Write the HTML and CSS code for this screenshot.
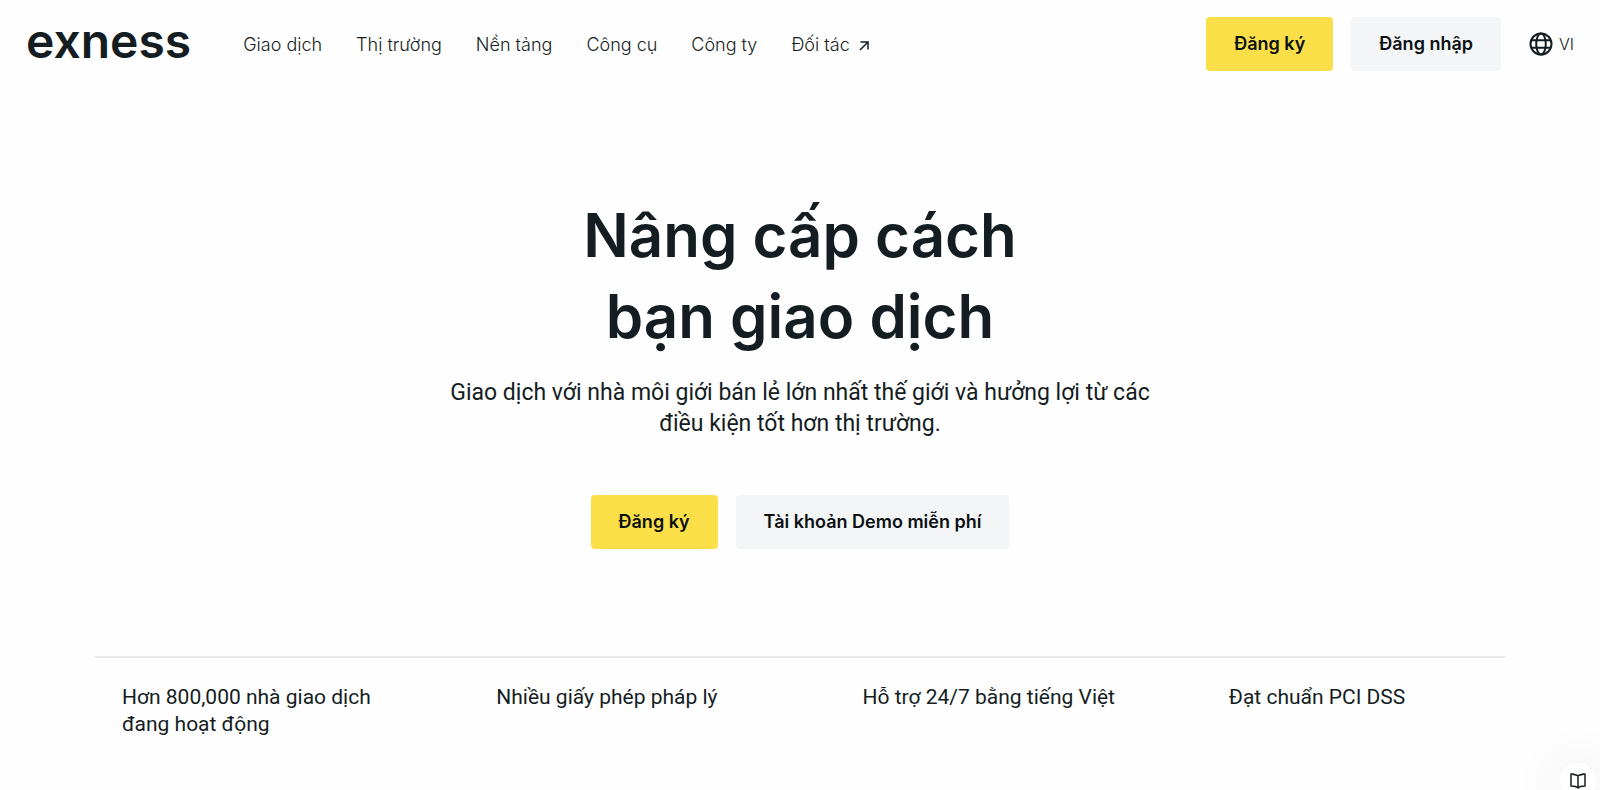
FILE: index.html
```html
<!DOCTYPE html>
<html lang="vi">
<head>
<meta charset="utf-8">
<meta name="viewport" content="width=device-width, initial-scale=1">
<title>Exness</title>
<link rel="stylesheet" href="styles.css">
</head>
<body>
<header class="header">
  <a class="logo" href="#">exness</a>
  <nav class="nav">
    <a href="#">Giao dịch</a>
    <a href="#">Thị trường</a>
    <a href="#">Nền tảng</a>
    <a href="#">Công cụ</a>
    <a href="#">Công ty</a>
    <a href="#">Đối tác
      <svg class="arrow" viewBox="0 0 10 10" aria-hidden="true"><path d="M1 9 8.800 1.200M1.500 1h7.500v7.500"/></svg>
    </a>
  </nav>
  <div class="actions">
    <button class="btn btn-primary" type="button">Đăng ký</button>
    <button class="btn btn-secondary" type="button">Đăng nhập</button>
    <button class="language" type="button">
      <svg class="globe" viewBox="0 0 24 24" aria-hidden="true"><circle cx="12" cy="12" r="10.500"/><ellipse cx="12" cy="12" rx="4.800" ry="10.500"/><path d="M2.500 8.300h19M2.500 15.700h19"/></svg>
      VI
    </button>
  </div>
</header>
<main>
  <section class="hero">
    <h1>Nâng cấp cách<br>bạn giao dịch</h1>
    <p>Giao dịch với nhà môi giới bán lẻ lớn nhất thế giới và hưởng lợi từ các điều kiện tốt hơn thị trường.</p>
    <div class="hero-actions">
      <button class="btn btn-primary" type="button">Đăng ký</button>
      <button class="btn btn-secondary" type="button">Tài khoản Demo miễn phí</button>
    </div>
  </section>
  <ul class="features">
    <li>Hơn 800,000 nhà giao dịch<br>đang hoạt động</li>
    <li>Nhiều giấy phép pháp lý</li>
    <li>Hỗ trợ 24/7 bằng tiếng Việt</li>
    <li>Đạt chuẩn PCI DSS</li>
  </ul>
</main>
<button class="guide" type="button" aria-label="Hướng dẫn">
  <svg viewBox="0 0 16 16" aria-hidden="true"><path d="M8 2.800C6.500 1.800 3.800 1.800 2.500 1H1v12c3 0 5.500.3 7 2 1.500-1.700 4-2 7-2V1h-1.500C12.200 1.800 9.500 1.800 8 2.800zM8 2.800v12"/></svg>
</button>
</body>
</html>
```
FILE: styles.css
```css
* { box-sizing: border-box; }

body {
  margin: 0;
  min-height: 100vh;
  overflow: hidden;
  background: #fefefe;
  color: #141d22;
  font-family: Inter, "Noto Sans", sans-serif;
  font-size: 18px;
}

a { color: inherit; text-decoration: none; }

.header {
  display: flex;
  align-items: center;
  height: 88px;
  padding: 0 26px;
}

.logo {
  font-size: 48px;
  font-weight: 600;
  line-height: 60px;
  margin-bottom: 6px;
}

.nav {
  display: flex;
  gap: 34px;
  margin-left: 52px;
  font-weight: 300;
  white-space: nowrap;
}

.arrow {
  width: 10px;
  height: 10px;
  margin-left: 4px;
  fill: none;
  stroke: currentColor;
  stroke-width: 1.5;
}

.actions {
  display: flex;
  align-items: center;
  gap: 18px;
  margin-left: auto;
}

.btn {
  height: 54px;
  padding: 0 28px;
  border: 0;
  border-radius: 4px;
  color: #0b1013;
  font: 600 18px/24px Inter, "Noto Sans", sans-serif;
}

.btn-primary { background: #fbdf48; }
.btn-secondary { background: #f4f5f7; }

.language {
  display: flex;
  align-items: center;
  gap: 6px;
  margin-left: 10px;
  padding: 0;
  border: 0;
  background: none;
  color: #141d22;
  font: 300 16px/24px Inter, "Noto Sans", sans-serif;
}

.globe {
  width: 24px;
  height: 24px;
  fill: none;
  stroke: currentColor;
  stroke-width: 2;
}

.hero {
  padding: 107px 24px 107px;
  text-align: center;
}

.hero h1 {
  margin: 0;
  font-size: 60px;
  font-weight: 600;
  line-height: 81px;
}

.hero p {
  max-width: 740px;
  margin: 20px auto 0;
  font-family: Roboto, "Noto Sans", sans-serif;
  font-size: 23px;
  line-height: 31px;
}

.hero-actions {
  display: flex;
  justify-content: center;
  gap: 18px;
  margin-top: 56px;
}

.features {
  display: grid;
  grid-template-columns: 374fr 366fr 366fr 277fr;
  margin: 0 94px;
  padding: 26px 0 48px 28px;
  border-top: 2px solid #ececec;
  list-style: none;
  font-family: Roboto, "Noto Sans", sans-serif;
  font-size: 21px;
  line-height: 27px;
}

.guide {
  position: fixed;
  right: 4px;
  bottom: -9px;
  display: grid;
  place-items: center;
  width: 36px;
  height: 36px;
  padding: 0;
  border: 0;
  border-radius: 50%;
  background: #fff;
  color: #141d22;
  box-shadow: 0 2px 48px 8px rgba(20, 29, 34, .06);
}

.guide svg {
  width: 16px;
  height: 16px;
  fill: none;
  stroke: currentColor;
  stroke-width: 1.5;
  stroke-linejoin: round;
}
```
